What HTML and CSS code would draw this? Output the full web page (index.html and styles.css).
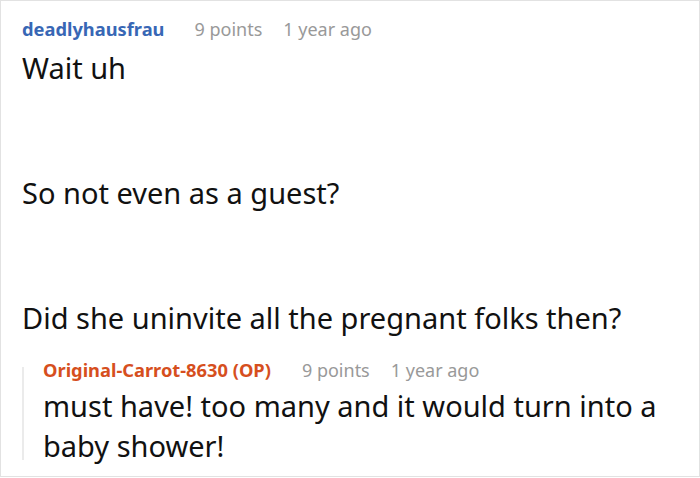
FILE: index.html
```html
<!DOCTYPE html>
<html lang="en">
<head>
    <meta charset="UTF-8">
    <title>Comment</title>
    <link rel="stylesheet" href="styles.css">
</head>
<body>
    <div class="thread">
        <div class="comment">
            <div class="meta">
                <span class="author">deadlyhausfrau</span>
                <span class="points">9 points</span>
                <span class="time">1 year ago</span>
            </div>
            <div class="text">
                <p>Wait uh</p>
                <p>So not even as a guest?</p>
                <p>Did she uninvite all the pregnant folks then?</p>
            </div>
        </div>
        <div class="reply">
            <div class="meta">
                <span class="author op">Original-Carrot-8630 (OP)</span>
                <span class="points">9 points</span>
                <span class="time">1 year ago</span>
            </div>
            <div class="text">
                <p>must have! too many and it would turn into a baby shower!</p>
            </div>
        </div>
    </div>
</body>
</html>
```

FILE: styles.css
```css
body {
    margin: 0;
    font-family: 'Noto Sans', 'Open Sans', sans-serif;
    background: #fff;
    color: #111;
}

.thread {
    width: 700px;
    height: 477px;
    box-sizing: border-box;
    border: 1px solid #e2e2e2;
    padding: 16px 20px 0 21px;
    overflow: hidden;
}

.meta {
    font-size: 18px;
    line-height: 24px;
    display: flex;
}

.author {
    font-weight: bold;
    font-size: 18.3px;
    color: #3867b5;
    margin-right: 30px;
}

.author.op {
    color: #d64f1e;
    margin-right: 31px;
}

.points {
    color: #999;
    margin-right: 21px;
}

.time {
    color: #999;
}

.text {
    margin-top: 7px;
}

.text p {
    margin: 0 0 85px;
    font-size: 29px;
    line-height: 40px;
}

.comment .text p:last-child {
    margin-bottom: 0;
}

.reply {
    display: flex;
    flex-direction: column;
    margin-top: 29px;
    border-left: 2px solid #ebebeb;
    padding-left: 19px;
}

.reply .meta {
    margin-top: -9px;
}

.reply .text {
    margin-top: 4px;
    margin-bottom: -6px;
}

.reply .text p {
    margin: 0;
}
```
